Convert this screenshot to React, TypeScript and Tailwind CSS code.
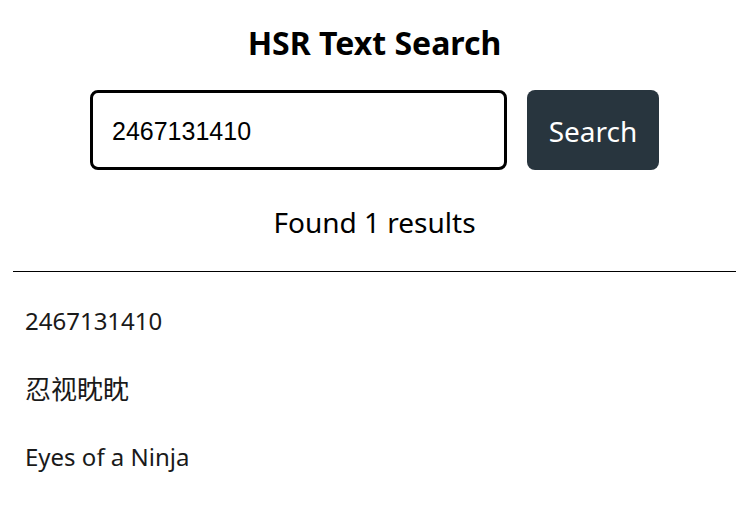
import { useState } from "react";

const results = ["2467131410", "忍视眈眈", "Eyes of a Ninja"];

const isCjk = (s: string) => /[\u4e00-\u9fff]/.test(s);

export default function App() {
  const [query, setQuery] = useState("2467131410");

  return (
    <div className="w-full overflow-hidden bg-white">
      <div
        className="w-[749px] text-black"
        style={{ fontFamily: '"Noto Sans", "Noto Sans CJK SC", sans-serif' }}
      >
        {/* Header */}
        <h1 className="mt-[23px] text-center text-[32px] font-bold leading-[40px]">
          HSR Text Search
        </h1>

        {/* Search form */}
        <form
          className="mt-[27px] flex justify-center gap-5"
          onSubmit={(e) => e.preventDefault()}
        >
          <input
            type="text"
            value={query}
            onChange={(e) => setQuery(e.target.value)}
            className="h-[80px] w-[417px] rounded-lg border-[3px] border-black bg-white pl-[19px] pt-[3px] text-[25px] text-black outline-none"
            style={{ fontFamily: '"Liberation Sans", Arial, sans-serif' }}
          />
          <button
            type="submit"
            className="h-[80px] w-[132px] rounded-lg bg-[#28353e] pt-[2px] text-[28px] text-white"
          >
            Search
          </button>
        </form>

        {/* Status */}
        <p className="mt-[34px] text-center text-[28px] leading-[36px]">
          Found 1 results
        </p>

        <hr className="mx-[13px] mt-[31px] border-t border-black" />

        {/* Results */}
        <div className="mt-[31px] flex flex-col gap-8 px-[25px] text-[24px] leading-[36px] text-[#1a1a1a]">
          {results.map((r, i) => (
            <p key={i} className={isCjk(r) ? "text-[26px]" : ""}>
              {r}
            </p>
          ))}
        </div>
      </div>
    </div>
  );
}
